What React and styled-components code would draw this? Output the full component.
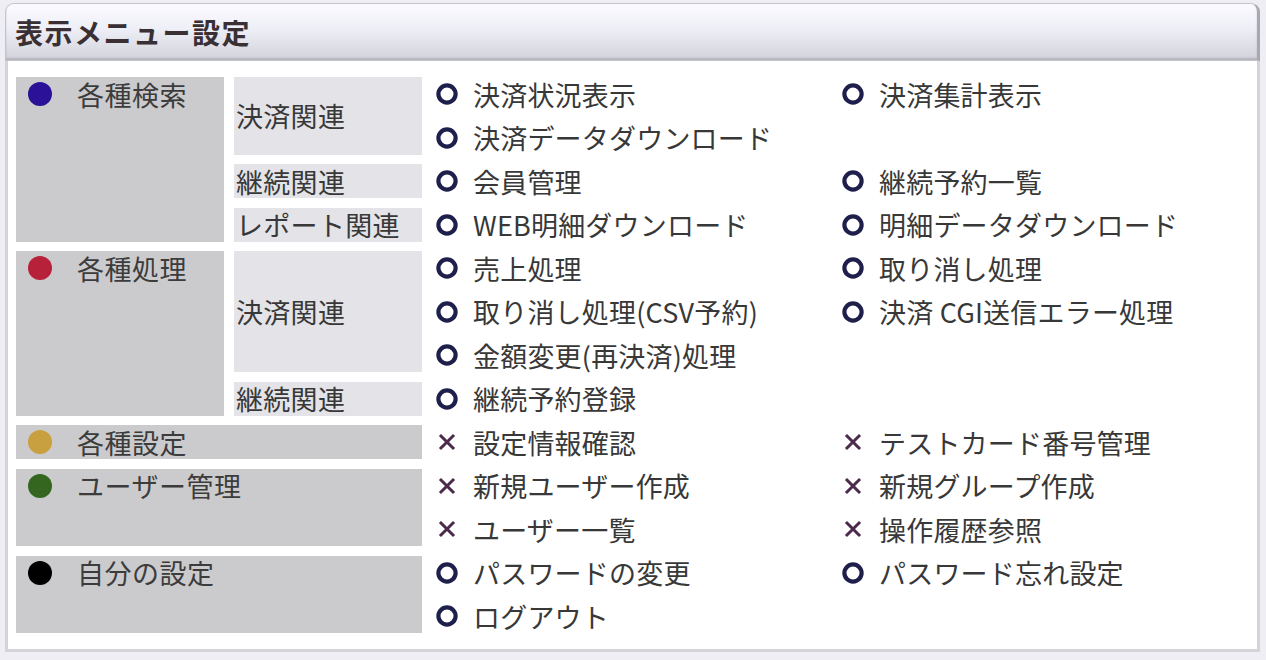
import React from "react";
import styled, { createGlobalStyle } from "styled-components";

const GlobalStyle = createGlobalStyle`
  body {
    margin: 0;
    background: #eeeef4;
    font-family: "Noto Sans CJK JP", "Noto Sans", sans-serif;
  }
`;

const Panel = styled.section`
  margin: 3px 0 0 5px;
  width: 1255px;
`;

const Header = styled.div`
  height: 56px;
  display: flex;
  align-items: center;
  padding-left: 9px;
  border: 1px solid #c4c4ca;
  border-right: 3px solid #a8a8b0;
  border-radius: 9px 9px 0 0;
  background: linear-gradient(#fbfbff 0%, #eeeef6 45%, #d2d2da 100%);
  box-shadow: inset 0 -2px 2px rgba(120, 120, 130, 0.35);
`;

const Title = styled.h1`
  margin: 0;
  font-size: 28px;
  font-weight: bold;
  color: #3a3034;
  letter-spacing: 1.5px;
`;

const Body = styled.div`
  background: #fff;
  border: 3px solid #d4d4d8;
  border-top: none;
  padding: 16px 8px 16px 8px;
`;

const Grid = styled.div`
  display: grid;
  grid-template-columns: 208px 188px 396px 1fr;
  grid-auto-rows: 34px;
  row-gap: 9.5px;
  column-gap: 10px;
`;

const Category = styled.div`
  grid-column: ${(p) => (p.$wide ? "1 / 3" : "1")};
  grid-row: ${(p) => p.$row} / span ${(p) => p.$span};
  background: #cbcbcd;
`;

const CategoryHead = styled.div`
  height: 34px;
  display: flex;
  align-items: center;
  padding-left: 12px;
  gap: 25px;
  font-size: 27px;
  color: #3c3c3c;
  letter-spacing: 0.5px;
`;

const Dot = styled.span`
  width: 24px;
  height: 24px;
  border-radius: 50%;
  background: ${(p) => p.$color};
  flex: none;
`;

const Sub = styled.div`
  grid-column: 2;
  grid-row: ${(p) => p.$row} / span ${(p) => p.$span};
  background: #e4e4e8;
  display: flex;
  align-items: center;
  padding-left: 2px;
  font-size: 27px;
  color: #383838;
  letter-spacing: 0.3px;
`;

const Item = styled.div`
  grid-column: ${(p) => p.$col};
  grid-row: ${(p) => p.$row};
  display: flex;
  align-items: center;
  gap: 14px;
  padding-left: 3px;
  font-size: 27px;
  color: #383838;
  letter-spacing: 0.2px;
  white-space: nowrap;
`;

const IconBox = styled.span`
  width: 24px;
  height: 24px;
  display: flex;
  align-items: center;
  justify-content: center;
  flex: none;
`;

const Mark = ({ type }) => (
  <IconBox>
    {type === "o" ? (
      <svg width="24" height="24" viewBox="0 0 24 24">
        <circle cx="12" cy="12" r="8.6" fill="none" stroke="#1f1f4c" strokeWidth="4.2" />
      </svg>
    ) : (
      <svg width="18" height="18" viewBox="0 0 18 18">
        <path d="M3 3 L15 15 M15 3 L3 15" stroke="#4c2a4c" strokeWidth="3" strokeLinecap="square" />
      </svg>
    )}
  </IconBox>
);

const sections = [
  {
    label: "各種検索",
    color: "#2a1197",
    groups: [
      {
        label: "決済関連",
        rows: [
          [["o", "決済状況表示"], ["o", "決済集計表示"]],
          [["o", "決済データダウンロード"]],
        ],
      },
      { label: "継続関連", rows: [[["o", "会員管理"], ["o", "継続予約一覧"]]] },
      {
        label: "レポート関連",
        rows: [[["o", "WEB明細ダウンロード"], ["o", "明細データダウンロード"]]],
      },
    ],
  },
  {
    label: "各種処理",
    color: "#b7213a",
    groups: [
      {
        label: "決済関連",
        rows: [
          [["o", "売上処理"], ["o", "取り消し処理"]],
          [["o", "取り消し処理(CSV予約)"], ["o", "決済 CGI送信エラー処理"]],
          [["o", "金額変更(再決済)処理"]],
        ],
      },
      { label: "継続関連", rows: [[["o", "継続予約登録"]]] },
    ],
  },
  {
    label: "各種設定",
    color: "#c9a040",
    rows: [[["x", "設定情報確認"], ["x", "テストカード番号管理"]]],
  },
  {
    label: "ユーザー管理",
    color: "#35661f",
    rows: [
      [["x", "新規ユーザー作成"], ["x", "新規グループ作成"]],
      [["x", "ユーザー一覧"], ["x", "操作履歴参照"]],
    ],
  },
  {
    label: "自分の設定",
    color: "#000",
    rows: [
      [["o", "パスワードの変更"], ["o", "パスワード忘れ設定"]],
      [["o", "ログアウト"]],
    ],
  },
];

function buildCells() {
  const cells = [];
  let row = 1;
  sections.forEach((s, si) => {
    const groups = s.groups || [{ rows: s.rows }];
    const span = groups.reduce((n, g) => n + g.rows.length, 0);
    cells.push(
      <Category key={"c" + si} $row={row} $span={span} $wide={!s.groups}>
        <CategoryHead>
          <Dot $color={s.color} />
          {s.label}
        </CategoryHead>
      </Category>
    );
    groups.forEach((g, gi) => {
      if (g.label) {
        cells.push(
          <Sub key={`s${si}-${gi}`} $row={row} $span={g.rows.length}>
            {g.label}
          </Sub>
        );
      }
      g.rows.forEach((r) => {
        r.forEach(([type, text], ci) => {
          cells.push(
            <Item key={`i${row}-${ci}`} $row={row} $col={ci + 3}>
              <Mark type={type} />
              {text}
            </Item>
          );
        });
        row++;
      });
    });
  });
  return cells;
}

export default function App() {
  return (
    <>
      <GlobalStyle />
      <Panel>
        <Header>
          <Title>表示メニュー設定</Title>
        </Header>
        <Body>
          <Grid>{buildCells()}</Grid>
        </Body>
      </Panel>
    </>
  );
}
